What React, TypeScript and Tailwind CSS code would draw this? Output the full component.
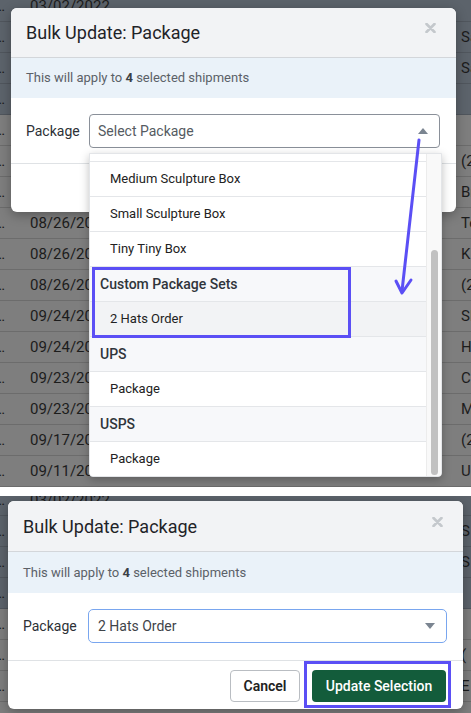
import React from "react";

type Row = { date: string; right: string };

const topRows: Row[] = [
  { date: "03/02/2022", right: "" },
  { date: "03/02/2022", right: "Sarah" },
  { date: "03/02/2022", right: "Sam" },
  { date: "03/02/2022", right: "" },
  { date: "03/01/2022", right: "" },
  { date: "08/26/2021", right: "(212)" },
  { date: "08/26/2021", right: "Brian" },
  { date: "08/26/2021", right: "Ted" },
  { date: "08/26/2021", right: "K" },
  { date: "08/26/2021", right: "(2" },
  { date: "09/24/2021", right: "Sl" },
  { date: "09/24/2021", right: "H" },
  { date: "09/23/2021", right: "C" },
  { date: "09/23/2021", right: "M" },
  { date: "09/17/2021", right: "(2" },
  { date: "09/11/2021", right: "U" },
];

const bottomRows: Row[] = [
  { date: "03/02/2022", right: "" },
  { date: "03/02/2022", right: "S" },
  { date: "03/02/2022", right: "S" },
  { date: "03/02/2022", right: "" },
  { date: "08/26/2021", right: "" },
  { date: "08/26/2021", right: "(" },
  { date: "08/26/2021", right: "E" },
  { date: "", right: "" },
];

function BgTable({ rows, selected }: { rows: Row[]; selected: number }) {
  return (
    <div>
      {rows.map((r, i) => (
        <div
          key={i}
          className={
            i < selected
              ? "flex h-[31px] items-center border-b border-[#50565d] bg-[#5c636b]"
              : "flex h-[31px] items-center border-b border-[#6c6c6c] bg-[#7e7e7e]"
          }
        >
          <span className="-ml-[5px] w-[35px] shrink-0 text-[15px] text-[#1c1c1c]">…</span>
          <span className="w-[431px] shrink-0 text-[15px] text-[#1c1c1c]">{r.date}</span>
          <span className="whitespace-nowrap text-[15px] text-[#1c1c1c]">{r.right}</span>
        </div>
      ))}
    </div>
  );
}

function CloseIcon() {
  return (
    <svg width="11" height="10" viewBox="0 0 11 10" className="shrink-0">
      <path d="M1.5 1 L9.5 9 M9.5 1 L1.5 9" stroke="#c4c8cc" strokeWidth="2.6" strokeLinecap="round" />
    </svg>
  );
}

function Caret({ up }: { up?: boolean }) {
  return (
    <svg width="10" height="6" viewBox="0 0 10 6" className="shrink-0">
      <path d={up ? "M0 6 L5 0 L10 6 Z" : "M0 0 L10 0 L5 6 Z"} fill="#7b8591" />
    </svg>
  );
}

const menu: { label: string; group?: boolean; active?: boolean }[] = [
  { label: "Large Sculpture Box" },
  { label: "Medium Sculpture Box" },
  { label: "Small Sculpture Box" },
  { label: "Tiny Tiny Box" },
  { label: "Custom Package Sets", group: true },
  { label: "2 Hats Order", active: true },
  { label: "UPS", group: true },
  { label: "Package" },
  { label: "USPS", group: true },
  { label: "Package" },
];

function Dropdown() {
  return (
    <div className="absolute left-[-1px] top-[38px] flex h-[324px] w-[353px] overflow-hidden rounded-b-[4px] border border-[#e3e5e8] bg-white shadow-[0_3px_10px_rgba(0,0,0,0.25)]">
      <div className="flex-1 overflow-hidden">
        <div className="-mt-[27px]">
          {menu.map((m, i) => (
            <div
              key={i}
              className={
                m.group
                  ? "flex h-[35px] items-center border-b border-[#e4e6e9] bg-[#f7f8fa] pl-[10px] text-[14px] font-medium text-[#30353b]"
                  : m.active
                  ? "flex h-[35px] items-center border-b border-[#e4e6e9] bg-[#f2f3f5] pl-[20px] text-[13px] text-[#222]"
                  : "flex h-[35px] items-center border-b border-[#e4e6e9] bg-white pl-[20px] text-[13px] text-[#222]"
              }
            >
              {m.label}
            </div>
          ))}
        </div>
      </div>
      <div className="flex w-[15px] shrink-0 justify-center border-l border-[#ececec] bg-[#f9f9f9]">
        <div className="mt-[96px] h-[225px] w-[7px] rounded-full bg-[#c1c1c1]" />
      </div>
    </div>
  );
}

function Footer() {
  return (
    <div className="flex h-[49px] items-start justify-end gap-[12px] border-t border-[#dfe2e5] pr-[17px] pt-[9px]">
      <button className="h-[32px] w-[70px] rounded-[4px] border border-[#b9bdc2] bg-white text-[14px] font-semibold text-[#222]">
        Cancel
      </button>
      <span className="relative">
        <button className="h-[32px] w-[134px] rounded-[4px] bg-[#135c3b] text-[14px] font-medium text-white">
          Update Selection
        </button>
        <span className="absolute -bottom-[6px] -left-[8px] -right-[5px] -top-[9px] border-[3px] border-[#5b4ff5]" />
      </span>
    </div>
  );
}

export default function App() {
  return (
    <div className="h-[713px] w-[471px] overflow-hidden bg-white font-['Roboto',sans-serif]">
      {/* dropdown open */}
      <section className="relative h-[487px] overflow-hidden">
        <div className="-mt-[9px]">
          <BgTable rows={topRows} selected={4} />
        </div>

        <div className="absolute left-[11px] top-[8px] w-[445px] rounded-[6px] bg-white shadow-[0_3px_12px_rgba(0,0,0,0.3)]">
          <div className="flex h-[50px] items-center justify-between rounded-t-[6px] border-b border-[#d3d6da] bg-[#f2f3f5] pl-[15px] pr-[20px]">
            <h2 className="text-[18px] text-[#1f2328]">Bulk Update: Package</h2>
            <span className="mb-[9px]"><CloseIcon /></span>
          </div>
          <div className="flex h-[40px] items-center bg-[#eaf2f9] px-[15px] text-[13px] text-[#5b6168]">
            This will apply to&nbsp;<b className="font-bold text-[#3b4046]">4</b>&nbsp;selected shipments
          </div>
          <div className="flex items-center pb-[15px] pl-[15px] pr-[16px] pt-[16px]">
            <label className="w-[63px] shrink-0 text-[14px] text-[#2d3136]">Package</label>
            <div className="relative flex h-[34px] flex-1 items-center justify-between rounded-[4px] border border-[#8a9099] pl-[8px] pr-[11px]">
              <span className="text-[14px] text-[#555b62]">Select Package</span>
              <Caret up />
              <Dropdown />
            </div>
          </div>
          <div className="h-[49px] border-t border-[#dfe2e5]" />
        </div>

        <div className="absolute left-[92px] top-[267px] h-[71px] w-[259px] border-[3px] border-[#5b4ff5]" />
        <svg className="pointer-events-none absolute left-0 top-0" width="471" height="487">
          <path d="M419 140 L402 291" stroke="#5b4ff5" strokeWidth="3" strokeLinecap="round" fill="none" />
          <path d="M396 281 L402 293 L411 280" stroke="#5b4ff5" strokeWidth="3" strokeLinecap="round" strokeLinejoin="round" fill="none" />
        </svg>
      </section>

      {/* option chosen */}
      <section className="relative mt-[9px] h-[217px] overflow-hidden">
        <div className="-mt-[11px]">
          <BgTable rows={bottomRows} selected={4} />
        </div>

        <div className="absolute left-[8px] top-[5px] w-[455px] rounded-[6px] bg-white shadow-[0_3px_12px_rgba(0,0,0,0.3)]">
          <div className="flex h-[51px] items-center justify-between rounded-t-[6px] border-b border-[#d3d6da] bg-[#f2f3f5] pl-[15px] pr-[20px]">
            <h2 className="text-[18px] text-[#1f2328]">Bulk Update: Package</h2>
            <span className="mb-[9px]"><CloseIcon /></span>
          </div>
          <div className="flex h-[41px] items-center bg-[#eaf2f9] px-[15px] text-[13px] text-[#5b6168]">
            This will apply to&nbsp;<b className="font-bold text-[#3b4046]">4</b>&nbsp;selected shipments
          </div>
          <div className="flex items-center pb-[17px] pl-[15px] pr-[16px] pt-[16px]">
            <label className="w-[65px] shrink-0 text-[14px] text-[#2d3136]">Package</label>
            <div className="flex h-[34px] flex-1 items-center justify-between rounded-[5px] border-[1.5px] border-[#79a6ef] pl-[9px] pr-[11px]">
              <span className="text-[14px] text-[#3f444a]">2 Hats Order</span>
              <Caret />
            </div>
          </div>
          <Footer />
        </div>
      </section>
    </div>
  );
}
